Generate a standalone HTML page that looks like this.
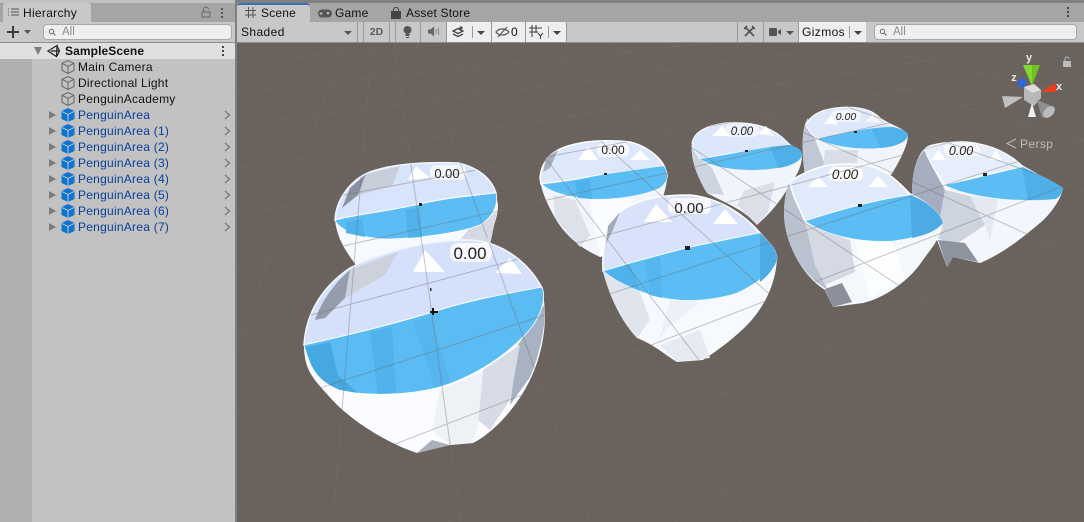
<!DOCTYPE html>
<html><head><meta charset="utf-8"><style>
html,body{margin:0;padding:0;width:1084px;height:522px;overflow:hidden;background:#808080;font-family:"Liberation Sans",sans-serif;font-size:12px;color:#111}
.a{position:absolute}
.row{position:absolute;left:78px;height:16px;line-height:16px;font-size:12px;letter-spacing:.25px;white-space:nowrap}
.blue{color:#0a3f9a}
.ic{position:absolute;left:60px;width:16px;height:16px}
.tri{position:absolute;left:49px;width:0;height:0;border-left:7px solid #7c7c7c;border-top:4px solid transparent;border-bottom:4px solid transparent}
.chev{position:absolute;left:224px;width:7px;height:10px}
.t{position:absolute;top:3px;height:19px;line-height:21px;font-size:12px;letter-spacing:.2px}
</style></head><body>
<div class="a" style="left:0;top:0;width:235px;height:522px;background:#c2c2c2"></div>
<div class="a" style="left:0;top:3px;width:235px;height:19px;background:#a5a5a5"></div>
<div class="a" style="left:3px;top:3px;width:88px;height:19px;background:#c8c8c8;border-radius:3px 3px 0 0"></div>
<svg class="a" style="left:7px;top:7px" width="14" height="12"><path d="M1 2h1M4 2h8M1 5h1M4 5h8M1 8h1M4 8h8" stroke="#555" stroke-width="1"/></svg>
<div class="t" style="left:23px;letter-spacing:.3px">Hierarchy</div>
<svg class="a" style="left:200px;top:6px" width="30" height="12"><path d="M2 6h8v5H2zM3.500 6V3.500a2.500 2.500 0 0 1 5 0" fill="none" stroke="#666"/><path d="M21 2h2v2h-2zM21 6h2v2h-2zM21 10h2v2h-2z" fill="#555"/></svg>
<div class="a" style="left:0;top:22px;width:235px;height:20px;background:#c8c8c8;border-bottom:1px solid #8e8e8e"></div>
<svg class="a" style="left:6px;top:25px" width="26" height="14"><path d="M7 1v12M1 7h12" stroke="#3a3a3a" stroke-width="2"/><path d="M18 5h7l-3.500 4z" fill="#555"/></svg>
<div class="a" style="left:43px;top:24px;width:187px;height:14px;background:#efefef;border:1px solid #a8a8a8;border-radius:4px"></div>
<svg class="a" style="left:48px;top:28px" width="10" height="9"><circle cx="3.500" cy="3.500" r="2.200" fill="none" stroke="#666"/><path d="M5 5l2.500 2.500" stroke="#666"/></svg>
<div class="a" style="left:62px;top:25px;line-height:15px;font-size:11.500px;color:#8c8c8c">All</div>

<div class="a" style="left:0;top:43px;width:32px;height:479px;background:#b0b0b0"></div>
<div class="a" style="left:0;top:43px;width:235px;height:16px;background:#e0e0e0"></div>
<div class="a" style="left:34px;top:47px;width:0;height:0;border-top:8px solid #7c7c7c;border-left:4.500px solid transparent;border-right:4.500px solid transparent"></div>
<svg class="a" style="left:47px;top:44px" width="14" height="14"><path d="M1 7L10 1.500 9.500 12.500zM4 7h8M10 2l2.500 5L10 12" fill="none" stroke="#222" stroke-width="1.200"/></svg>
<div class="row" style="left:65px;top:43px;font-weight:bold;letter-spacing:.1px">SampleScene</div>
<svg class="a" style="left:221px;top:46px" width="4" height="11"><path d="M1 0h2v2H1zM1 4h2v2H1zM1 8h2v2H1z" fill="#444"/></svg>

<svg class="ic" style="top:59px" viewBox="0 0 16 16"><path d="M8 1.500l6 2.800v7.200L8 14.500l-6-3V4.300zM2 4.300l6 3 6-3M8 7.300v7.200" fill="none" stroke="#666"/></svg>
<div class="row" style="top:59px">Main Camera</div>
<svg class="ic" style="top:75px" viewBox="0 0 16 16"><path d="M8 1.500l6 2.800v7.200L8 14.500l-6-3V4.300zM2 4.300l6 3 6-3M8 7.300v7.200" fill="none" stroke="#666"/></svg>
<div class="row" style="top:75px">Directional Light</div>
<svg class="ic" style="top:91px" viewBox="0 0 16 16"><path d="M8 1.500l6 2.800v7.200L8 14.500l-6-3V4.300zM2 4.300l6 3 6-3M8 7.300v7.200" fill="none" stroke="#666"/></svg>
<div class="row" style="top:91px">PenguinAcademy</div>

<div class="tri" style="top:111px"></div><svg class="ic" style="top:107px" viewBox="0 0 16 16"><path d="M8 1l6.500 3v8L8 15l-6.500-3V4z" fill="#1273cf"/><path d="M2 4.500l6 3 6-3M8 7.500V15" fill="none" stroke="#c2dcf5" stroke-width=".9"/></svg><div class="row blue" style="top:107px">PenguinArea</div><svg class="chev" style="top:110px"><path d="M1 1l4.500 4L1 9" fill="none" stroke="#777" stroke-width="1.300"/></svg>
<div class="tri" style="top:127px"></div><svg class="ic" style="top:123px" viewBox="0 0 16 16"><path d="M8 1l6.500 3v8L8 15l-6.500-3V4z" fill="#1273cf"/><path d="M2 4.500l6 3 6-3M8 7.500V15" fill="none" stroke="#c2dcf5" stroke-width=".9"/></svg><div class="row blue" style="top:123px">PenguinArea (1)</div><svg class="chev" style="top:126px"><path d="M1 1l4.500 4L1 9" fill="none" stroke="#777" stroke-width="1.300"/></svg>
<div class="tri" style="top:143px"></div><svg class="ic" style="top:139px" viewBox="0 0 16 16"><path d="M8 1l6.500 3v8L8 15l-6.500-3V4z" fill="#1273cf"/><path d="M2 4.500l6 3 6-3M8 7.500V15" fill="none" stroke="#c2dcf5" stroke-width=".9"/></svg><div class="row blue" style="top:139px">PenguinArea (2)</div><svg class="chev" style="top:142px"><path d="M1 1l4.500 4L1 9" fill="none" stroke="#777" stroke-width="1.300"/></svg>
<div class="tri" style="top:159px"></div><svg class="ic" style="top:155px" viewBox="0 0 16 16"><path d="M8 1l6.500 3v8L8 15l-6.500-3V4z" fill="#1273cf"/><path d="M2 4.500l6 3 6-3M8 7.500V15" fill="none" stroke="#c2dcf5" stroke-width=".9"/></svg><div class="row blue" style="top:155px">PenguinArea (3)</div><svg class="chev" style="top:158px"><path d="M1 1l4.500 4L1 9" fill="none" stroke="#777" stroke-width="1.300"/></svg>
<div class="tri" style="top:175px"></div><svg class="ic" style="top:171px" viewBox="0 0 16 16"><path d="M8 1l6.500 3v8L8 15l-6.500-3V4z" fill="#1273cf"/><path d="M2 4.500l6 3 6-3M8 7.500V15" fill="none" stroke="#c2dcf5" stroke-width=".9"/></svg><div class="row blue" style="top:171px">PenguinArea (4)</div><svg class="chev" style="top:174px"><path d="M1 1l4.500 4L1 9" fill="none" stroke="#777" stroke-width="1.300"/></svg>
<div class="tri" style="top:191px"></div><svg class="ic" style="top:187px" viewBox="0 0 16 16"><path d="M8 1l6.500 3v8L8 15l-6.500-3V4z" fill="#1273cf"/><path d="M2 4.500l6 3 6-3M8 7.500V15" fill="none" stroke="#c2dcf5" stroke-width=".9"/></svg><div class="row blue" style="top:187px">PenguinArea (5)</div><svg class="chev" style="top:190px"><path d="M1 1l4.500 4L1 9" fill="none" stroke="#777" stroke-width="1.300"/></svg>
<div class="tri" style="top:207px"></div><svg class="ic" style="top:203px" viewBox="0 0 16 16"><path d="M8 1l6.500 3v8L8 15l-6.500-3V4z" fill="#1273cf"/><path d="M2 4.500l6 3 6-3M8 7.500V15" fill="none" stroke="#c2dcf5" stroke-width=".9"/></svg><div class="row blue" style="top:203px">PenguinArea (6)</div><svg class="chev" style="top:206px"><path d="M1 1l4.500 4L1 9" fill="none" stroke="#777" stroke-width="1.300"/></svg>
<div class="tri" style="top:223px"></div><svg class="ic" style="top:219px" viewBox="0 0 16 16"><path d="M8 1l6.500 3v8L8 15l-6.500-3V4z" fill="#1273cf"/><path d="M2 4.500l6 3 6-3M8 7.500V15" fill="none" stroke="#c2dcf5" stroke-width=".9"/></svg><div class="row blue" style="top:219px">PenguinArea (7)</div><svg class="chev" style="top:222px"><path d="M1 1l4.500 4L1 9" fill="none" stroke="#777" stroke-width="1.300"/></svg>

<!-- Right header -->
<div class="a" style="left:237px;top:3px;width:847px;height:19px;background:#a5a5a5"></div>
<div class="a" style="left:237px;top:3px;width:73px;height:19px;background:#c8c8c8;border-radius:3px 3px 0 0;border-top:2px solid #3a72b0;box-sizing:border-box"></div>
<svg class="a" style="left:245px;top:7px" width="12" height="12"><path d="M3.500 0v11M8 0v11M0 3.500h11M0 8h11" stroke="#555"/></svg>
<div class="t" style="left:261px">Scene</div>
<svg class="a" style="left:318px;top:9px" width="14" height="9"><rect x="0" y="0.500" width="14" height="8" rx="4" fill="#555"/><circle cx="10" cy="4" r="1.300" fill="#bbb"/><path d="M3 3v3M1.500 4.500h3" stroke="#bbb"/></svg>
<div class="t" style="left:335px">Game</div>
<svg class="a" style="left:390px;top:7px" width="12" height="12"><path d="M1 4h10v8H1z" fill="#444"/><path d="M3.500 4V2.500a2.500 2 0 0 1 5 0V4" fill="none" stroke="#444"/></svg>
<div class="t" style="left:406px">Asset Store</div>
<svg class="a" style="left:1067px;top:7px" width="4" height="12"><path d="M0 0h2v2H0zM0 4h2v2H0zM0 8h2v2H0z" fill="#444"/></svg>

<div class="a" style="left:237px;top:22px;width:847px;height:20px;background:#c8c8c8"></div>
<div class="a" style="left:237px;top:42px;width:847px;height:1px;background:#8e8e8e"></div>
<div class="a" style="left:241px;top:24px;line-height:17px;font-size:12px;letter-spacing:.4px">Shaded</div>
<div class="a" style="left:344px;top:31px;width:0;height:0;border-top:4px solid #555;border-left:4px solid transparent;border-right:4px solid transparent"></div>
<div class="a" style="left:357px;top:22px;width:1px;height:20px;background:#999"></div>
<div class="a" style="left:363px;top:22px;width:1px;height:20px;background:#999"></div>
<div class="a" style="left:364px;top:24px;width:25px;text-align:center;line-height:17px;font-size:10.500px;font-weight:bold;color:#5c5c5c">2D</div>
<div class="a" style="left:389px;top:22px;width:1px;height:20px;background:#999"></div>
<div class="a" style="left:395px;top:22px;width:1px;height:20px;background:#999"></div>
<svg class="a" style="left:401px;top:25px" width="13" height="14"><circle cx="6.500" cy="5" r="4" fill="#555"/><path d="M4.500 9h4v2h-4zM5 12h3v1H5z" fill="#555"/></svg>
<div class="a" style="left:420px;top:22px;width:1px;height:20px;background:#999"></div>
<svg class="a" style="left:428px;top:26px" width="13" height="11"><path d="M0 3.500h2.500L6 .5v10L2.500 7.500H0z" fill="#666"/><path d="M8 3v5M10.500 2v7" stroke="#888" fill="none"/></svg>
<div class="a" style="left:447px;top:22px;width:44px;height:20px;background:#eee"></div>
<div class="a" style="left:491px;top:22px;width:1px;height:20px;background:#999"></div>
<div class="a" style="left:492px;top:22px;width:33px;height:20px;background:#eee"></div>
<div class="a" style="left:525px;top:22px;width:1px;height:20px;background:#999"></div>
<div class="a" style="left:526px;top:22px;width:40px;height:20px;background:#eee"></div>
<div class="a" style="left:566px;top:22px;width:1px;height:20px;background:#999"></div>
<div class="a" style="left:446px;top:22px;width:1px;height:20px;background:#999"></div>
<svg class="a" style="left:452px;top:25px" width="14" height="14"><path d="M1 6l5-2.500L11 6 6 8.500zM1 9l5 2.500L11 9M9 1v5M7 3h4" fill="none" stroke="#444" stroke-width="1.300"/></svg>
<div class="a" style="left:472px;top:26px;width:1px;height:12px;background:#999"></div>
<div class="a" style="left:477px;top:31px;width:0;height:0;border-top:4px solid #444;border-left:4px solid transparent;border-right:4px solid transparent"></div>
<svg class="a" style="left:495px;top:26px" width="15" height="12"><path d="M1 6c3-4 9-4 13 0-4 4-10 4-13 0zM3 11L12 1" fill="none" stroke="#555" stroke-width="1.200"/></svg>
<div class="a" style="left:511px;top:24px;line-height:17px;font-size:12px">0</div>
<svg class="a" style="left:529px;top:24px" width="15" height="16"><path d="M3 1v12M7 1v8M0 4h13M0 8h9M9 9l2.500 3L14 9M11.500 12v3" fill="none" stroke="#444" stroke-width="1.100"/></svg>
<div class="a" style="left:548px;top:26px;width:1px;height:12px;background:#999"></div>
<div class="a" style="left:553px;top:31px;width:0;height:0;border-top:4px solid #444;border-left:4px solid transparent;border-right:4px solid transparent"></div>

<div class="a" style="left:737px;top:22px;width:1px;height:20px;background:#999"></div>
<svg class="a" style="left:743px;top:25px" width="13" height="13"><path d="M2 2l9 9M11 2L2 11" stroke="#555" stroke-width="1.800"/><path d="M1 4l3-3M9 1l3 3" stroke="#444" stroke-width="1.300"/></svg>
<div class="a" style="left:763px;top:22px;width:1px;height:20px;background:#999"></div>
<svg class="a" style="left:769px;top:28px" width="13" height="9"><rect x="0" y="0" width="8" height="8" rx="1" fill="#555"/><path d="M9 3l3-2v6l-3-2z" fill="#555"/></svg>
<div class="a" style="left:786px;top:31px;width:0;height:0;border-top:4px solid #555;border-left:4px solid transparent;border-right:4px solid transparent"></div>
<div class="a" style="left:798px;top:22px;width:1px;height:20px;background:#999"></div>
<div class="a" style="left:799px;top:22px;width:67px;height:20px;background:#eee"></div>
<div class="a" style="left:802px;top:24px;line-height:17px;font-size:12px;letter-spacing:.4px">Gizmos</div>
<div class="a" style="left:849px;top:26px;width:1px;height:12px;background:#999"></div>
<div class="a" style="left:854px;top:31px;width:0;height:0;border-top:4px solid #444;border-left:4px solid transparent;border-right:4px solid transparent"></div>
<div class="a" style="left:874px;top:24px;width:201px;height:14px;background:#efefef;border:1px solid #a8a8a8;border-radius:4px"></div>
<svg class="a" style="left:879px;top:28px" width="10" height="9"><circle cx="3.500" cy="3.500" r="2.200" fill="none" stroke="#666"/><path d="M5 5l2.500 2.500" stroke="#666"/></svg>
<div class="a" style="left:893px;top:25px;line-height:15px;font-size:11.500px;color:#8c8c8c">All</div>

<!-- Scene -->
<svg class="a" style="left:237px;top:43px" width="847" height="479" viewBox="237 43 847 479">
<defs>
<path id="grid" fill="none" d="M344 43L237 349M372 43L333 522M394 43L461 522M417 43L590 522M444 43L741 522M458 43L822 522M493 43L1020 522M535 43L1084 409M607 43L1084 260M668 43L1084 191M740 43L1084 141M843 43L1084 96M237 62L465 43M237 92L709 43M237 125L886 43M237 168L1039 43M237 215L1084 56M237 270L1084 79M237 335L1084 106M237 415L1084 140M237 505L1084 178M448 522L1084 226M674 522L1084 289M865 522L1084 369"/>
<clipPath id="bowls">
<path d="M803 135C804 120 815 110 835 108C850 106 870 107 880 118C890 125 905 128 908 135C908 145 900 160 893 172C885 185 860 188 815 198L808 190C803 170 802 150 803 135Z"/>
<path d="M692 143C694 132 705 126 725 123C745 122 770 123 787 142L802 155C802 168 795 178 788 188C778 205 768 215 757 225C745 210 725 203 707 193C698 178 690 160 692 143Z"/>
<path d="M912 192C912 170 918 150 930 145C945 141 965 140 980 144C1000 148 1015 158 1022 165L1063 188C1062 198 1050 215 1040 223C1020 240 1000 255 980 263L953 257L947 267L937 240C925 225 912 210 912 192Z"/>
<path d="M335 220C336 200 350 180 370 172C395 163 430 162 458 163C480 168 495 185 498 205C498 225 485 245 470 262L360 270C348 255 337 240 335 220Z"/>
<path d="M540 178C541 165 548 153 565 147C585 140 610 140 630 142C650 147 662 160 667 172C668 190 660 205 650 225L640 245L600 257C580 248 565 235 555 218C548 205 541 192 540 178Z"/>
<path d="M784 213C784 195 790 180 805 172C825 164 850 163 870 167C890 172 903 185 910 193C925 200 940 212 943 223C940 240 930 250 923 260C910 280 885 298 863 303L833 307L825 290C805 278 784 245 784 213Z"/>
<path d="M603 270C602 250 605 225 620 212C640 197 665 195 690 195C720 198 745 215 760 232C770 243 777 250 777 260C775 285 765 305 750 322C735 338 718 350 703 360L677 362C665 355 655 345 637 338C625 325 612 305 603 270Z"/>
<path d="M304 345C306 310 325 285 350 268C375 255 420 240 470 240C505 242 530 265 542 290C547 310 547 345 530 380C518 405 495 432 473 443L450 445L417 453C392 445 350 422 327 394C312 378 304 368 304 345Z"/>
</clipPath>
</defs>
<rect x="237" y="43" width="847" height="479" fill="#6a625c"/>
<use href="#grid" stroke="#7a736d" stroke-opacity=".35"/>

<!-- bowl 6 -->
<path d="M803 135C804 120 815 110 835 108C850 106 870 107 880 118C890 125 905 128 908 135C908 145 900 160 893 172C885 185 860 188 815 198L808 190C803 170 802 150 803 135Z" fill="#f0f4fb"/>
<path d="M803 135C804 125 806 120 808 118C812 135 818 145 825 165L822 195L808 190C803 170 802 150 803 135Z" fill="#c0c7d5"/>
<polygon points="825,150 858,150 855,186 820,195" fill="#d8dde8"/>
<path d="M806 125C810 115 820 110 835 108C850 106 870 107 880 118C888 124 900 128 908 135C890 127 855 132 818 139C812 135 808 130 806 125Z" fill="#dfe8fb" stroke="#fff"/>
<path d="M818 139C845 133 870 127 892 127C900 128 908 132 908 135C907 142 895 147 880 148C860 150 835 147 818 139Z" fill="#5bbdf3"/>
<path d="M872 129L892 127C900 128 908 132 908 135C907 142 895 147 880 148Z" fill="#50b2ea"/>
<rect x="831" y="110" width="30" height="12" rx="6" fill="#f2f5fc"/>
<polygon points="824,124 831,116 838,124" fill="#fff"/><polygon points="865,122 873,113 881,123" fill="#f4f6fc"/>
<text x="846" y="120" font-size="10.500" font-style="italic" text-anchor="middle" fill="#222" font-family="Liberation Sans">0.00</text>
<rect x="854" y="131" width="3" height="2" fill="#222"/>

<!-- bowl 4 -->
<path d="M692 143C694 132 705 126 725 123C745 122 770 123 787 142L802 155C802 168 795 178 788 188C778 205 768 215 757 225C745 210 725 203 707 193C698 178 690 160 692 143Z" fill="#f0f4fb"/>
<path d="M692 143L700 159L712 168L724 195L707 193C698 178 690 160 692 143Z" fill="#cdd3df"/>
<polygon points="745,190 775,182 768,212 757,225 737,205" fill="#dcdfe8"/>
<path d="M692 143C694 132 705 126 725 123C745 122 770 123 787 142L802 155C790 145 745 150 700 159C696 153 693 149 692 143Z" fill="#dde7fb" stroke="#fff"/>
<path d="M700 159C730 155 760 147 790 145C797 147 802 150 802 155C800 165 780 169 755 170C735 170 715 168 700 159Z" fill="#5bbdf3"/>
<path d="M770 147L790 145C797 147 802 150 802 155C800 162 788 167 778 168Z" fill="#4fb0e8"/>
<rect x="725" y="124" width="34" height="13" rx="6" fill="#eef2fc"/>
<polygon points="712,136 722,126 730,136" fill="#fff"/><polygon points="758,134 766,126 774,136" fill="#fff"/>
<text x="742" y="135" font-size="11.500" font-style="italic" text-anchor="middle" fill="#222" font-family="Liberation Sans">0.00</text>
<rect x="745" y="150" width="3" height="2" fill="#222"/>

<!-- bowl 8 -->
<path d="M912 192C912 170 918 150 930 145C945 141 965 140 980 144C1000 148 1015 158 1022 165L1063 188C1062 198 1050 215 1040 223C1020 240 1000 255 980 263L953 257L947 267L937 240C925 225 912 210 912 192Z" fill="#f3f7fd"/>
<path d="M912 192C912 170 918 155 925 150C930 165 940 180 945 190L937 235C925 225 912 210 912 192Z" fill="#a5adbe"/>
<polygon points="945,190 970,196 985,225 955,245 937,238" fill="#cdd3df"/>
<polygon points="938,240 965,243 978,262 953,257 947,267" fill="#8d939f"/>
<polygon points="970,196 998,199 990,240 985,225" fill="#e4e8f0"/>
<path d="M925 150C945 141 965 140 980 144C1000 148 1015 158 1023 167C1000 172 970 178 945 185C935 170 928 160 925 150Z" fill="#e6eefc" stroke="#fff"/>
<path d="M945 185C970 180 1000 172 1023 167C1040 175 1055 182 1063 188C1062 195 1058 198 1055 199C1030 202 975 200 945 185Z" fill="#5bbdf3"/>
<path d="M1022 168C1040 175 1055 182 1063 188C1062 195 1058 198 1055 199L1028 200Z" fill="#4fb0e8"/>
<rect x="944" y="143" width="36" height="13" rx="6" fill="#f5f7fd"/>
<polygon points="932,160 938,150 946,160" fill="#fff"/><polygon points="990,160 996,150 1002,160" fill="#fff"/>
<text x="961" y="155" font-size="12.500" font-style="italic" text-anchor="middle" fill="#222" font-family="Liberation Sans">0.00</text>
<rect x="983" y="173" width="4" height="3" fill="#222"/>

<!-- bowl 2 -->
<path d="M335 220C336 200 350 180 370 172C395 163 430 162 458 163C480 168 495 185 498 205C498 225 485 245 470 262L360 270C348 255 337 240 335 220Z" fill="#f6f9fe"/>
<polygon points="470,228 497,212 490,245 470,262 460,240" fill="#d5dae5"/>
<path d="M335 220C336 200 350 180 370 172C395 163 430 162 458 163C480 168 492 180 496 193C470 196 445 198 420 204C390 211 360 214 335 220Z" fill="#d8e4fb" stroke="#f0f7ff" stroke-width="1.500"/>
<polygon points="342,208 350,188 366,174 358,195" fill="#8a91a0"/>
<polygon points="366,174 400,166 392,186 358,195" fill="#c9cfda"/>
<path d="M335 220C360 214 390 211 420 204C445 198 470 196 496 193C499 205 492 218 480 225C460 233 420 238 390 239C365 239 340 232 335 220Z" fill="#5bbdf3" stroke="#fff" stroke-width=".8"/>
<polygon points="346,222 362,219 365,237 346,233" fill="#50b2ea"/><polygon points="405,210 420,207 422,237 408,238" fill="#50b2ea"/>
<rect x="430" y="165" width="36" height="15" rx="6" fill="#f4f7fd"/>
<polygon points="408,180 416,166 430,178" fill="#fff"/>
<text x="447" y="178" font-size="13" text-anchor="middle" fill="#222" font-family="Liberation Sans">0.00</text>
<rect x="419" y="203" width="3" height="3" fill="#222"/>

<!-- bowl 3 -->
<path d="M540 178C541 165 548 153 565 147C585 140 610 140 630 142C650 147 662 160 667 172C668 190 660 205 650 225L640 245L600 257C580 248 565 235 555 218C548 205 541 192 540 178Z" fill="#f2f6fc"/>
<polygon points="553,195 575,200 590,235 580,247 555,218" fill="#dde1ea"/>
<polygon points="590,200 630,198 640,235 600,257" fill="#fafcff"/>
<path d="M540 178C541 165 548 153 565 147C585 140 610 140 630 142C650 147 662 160 665 168C640 170 625 172 605 174C585 178 560 182 541 184Z" fill="#dee8fb" stroke="#fff" stroke-width="1.500"/>
<polygon points="543,172 546,158 558,150 550,168" fill="#a7aebc"/>
<path d="M542 184C565 182 585 178 605 174C625 171 645 168 664 166C670 175 668 182 660 188C640 197 610 200 590 199C570 197 550 193 542 184Z" fill="#5bbdf3" stroke="#eaf6ff" stroke-width=".6"/>
<polygon points="575,182 590,178 592,199 578,198" fill="#50b2ea"/>
<rect x="597" y="143" width="32" height="14" rx="6" fill="#f5f7fd"/>
<polygon points="578,160 588,146 598,160" fill="#fff"/><polygon points="630,160 640,150 650,160" fill="#fff"/>
<text x="613" y="154" font-size="12" text-anchor="middle" fill="#222" font-family="Liberation Sans">0.00</text>
<rect x="604" y="173" width="3" height="2" fill="#222"/>

<!-- bowl 7 -->
<path d="M784 213C784 195 790 180 805 172C825 164 850 163 870 167C890 172 903 185 910 193C925 200 940 212 943 223C940 240 930 250 923 260C910 280 885 298 863 303L833 307L825 290C805 278 784 245 784 213Z" fill="#f4f8fd"/>
<path d="M784 213C784 195 788 185 790 182C795 200 802 215 806 225L815 265L828 290C805 278 784 245 784 213Z" fill="#bac1cf"/>
<polygon points="806,224 823,231 850,240 855,272 825,285 815,265" fill="#d4d9e3"/>
<polygon points="825,289 842,283 852,302 833,307" fill="#8a8f9b"/>
<polygon points="855,240 893,241 905,280 870,298" fill="#fbfdff"/>
<path d="M790 182C795 177 815 167 830 165C850 163 870 164 880 170C893 175 903 187 910 195C875 200 840 210 805 221C798 205 792 195 790 182Z" fill="#e0eafb" stroke="#fff" stroke-width="1.500"/>
<path d="M805 221C840 210 875 200 910 195C925 200 940 212 943 223C935 232 915 238 893 241C860 243 825 235 805 221Z" fill="#5bbdf3" stroke="#eaf6ff" stroke-width=".6"/>
<path d="M910 195C925 200 940 212 943 223C935 232 925 235 912 238Z" fill="#4cabe3"/>
<rect x="829" y="167" width="34" height="14" rx="6" fill="#fff"/>
<polygon points="808,187 818,176 828,187" fill="#fff"/><polygon points="868,187 878,176 888,187" fill="#fff"/>
<text x="845" y="179" font-size="13.500" font-style="italic" text-anchor="middle" fill="#222" font-family="Liberation Sans">0.00</text>
<rect x="858" y="204" width="4" height="3" fill="#222"/>

<!-- bowl 5 -->
<path d="M603 270C602 250 605 225 620 212C640 197 665 195 690 195C720 198 745 215 760 232C770 243 777 250 777 260C775 285 765 305 750 322C735 338 718 350 703 360L677 362C665 355 655 345 637 338C625 325 612 305 603 270Z" fill="#f6f9fe"/>
<path d="M603 272L640 292L650 320L637 338C625 325 612 305 603 272Z" fill="#e0e4ed"/>
<polygon points="670,300 700,302 665,330 657,347" fill="#edf0f6"/>
<polygon points="660,345 700,330 710,358 677,362" fill="#e6eaf2"/>
<path d="M603 271C602 250 605 225 620 212C640 197 665 195 690 195C720 198 745 215 760 233C735 238 710 243 687 248C660 255 630 263 603 271Z" fill="#d8e3fb" stroke="#fff" stroke-width="1.500"/>
<polygon points="606,244 608,226 620,212 612,232" fill="#a3aab8"/>
<path d="M603 271C630 263 660 255 687 248C710 243 735 238 760 233C770 243 778 250 777 260C772 272 755 285 737 293C715 300 690 302 670 299C645 295 620 285 603 271Z" fill="#5bbdf3" stroke="#eaf6ff" stroke-width=".6"/>
<path d="M760 233C770 243 778 250 777 260C774 268 768 276 760 282Z" fill="#4cabe3"/>
<polygon points="606,272 630,264 640,290 617,280" fill="#50b2ea"/>
<polygon points="645,260 660,256 662,298 650,295" fill="#53b6ed"/>
<rect x="668" y="198" width="43" height="16" rx="6" fill="#f6f8fd"/>
<polygon points="644,222 656,204 672,222" fill="#fff"/><polygon points="713,224 725,209 738,224" fill="#fff"/>
<text x="689" y="213" font-size="15" text-anchor="middle" fill="#222" font-family="Liberation Sans">0.00</text>
<rect x="685" y="246" width="5" height="4" fill="#222"/>

<!-- bowl 1 -->
<path d="M304 345C306 310 325 285 350 268C375 255 420 240 470 240C505 242 530 265 542 290C547 310 547 345 530 380C518 405 495 432 473 443L450 445L417 453C392 445 350 422 327 394C312 378 304 368 304 345Z" fill="#fafcff"/>
<path d="M544 305C547 320 540 355 530 377L510 405L518 345Z" fill="#a8b2c3"/>
<polygon points="483,370 520,345 510,400 490,430 478,420" fill="#d6dbe5"/>
<polygon points="440,390 483,372 478,425 473,443 450,445 432,430" fill="#eef1f6"/>
<polygon points="417,453 432,440 450,445" fill="#aab0bc"/>
<path d="M304 345C306 310 325 285 350 268C375 255 420 240 470 240C505 242 530 265 542 288C520 292 500 295 477 300C465 303 445 308 433 312C400 322 350 335 304 345Z" fill="#d5e1fa" stroke="#f2f8ff" stroke-width="1.500"/>
<path d="M315 320C320 305 332 285 350 270L345 298L325 318Z" fill="#959dac"/>
<polygon points="350,270 398,252 385,275 345,298" fill="#ccd1db"/>
<path d="M304 345C350 335 400 322 433 312C470 300 510 293 542 287C547 300 540 320 523 337C500 360 470 378 440 387C410 395 370 397 340 390C320 382 310 370 304 345Z" fill="#5abcf3" stroke="#fff" stroke-width=".8"/>
<path d="M306 347L330 342L338 375L358 393L340 390C320 382 310 370 306 347Z" fill="#45a8e0"/>
<polygon points="370,332 392,327 396,392 378,394" fill="#50b2ea"/>
<polygon points="413,322 432,317 450,382 435,388" fill="#54b6ed"/>
<rect x="450" y="243" width="42" height="19" rx="8" fill="#f6f8fd"/>
<polygon points="413,272 425,250 445,272" fill="#fff"/><polygon points="495,273 510,258 522,274" fill="#fff"/>
<text x="470" y="259" font-size="17" text-anchor="middle" fill="#222" font-family="Liberation Sans">0.00</text>
<path d="M430 312h8M433 308v7" stroke="#111" stroke-width="2"/>
<rect x="430" y="288" width="1.500" height="3" fill="#333"/>

<!-- grid over bowls -->
<use href="#grid" stroke="#6a6a6a" stroke-opacity=".38" clip-path="url(#bowls)"/>

<!-- gizmo -->
<polygon points="1023,65 1040,65 1032,86" fill="#6fc11f"/>
<polygon points="1023,65 1032,65 1032,86" fill="#85d72f"/>
<polygon points="1041,92 1055,83 1057,92" fill="#e8401c"/>
<circle cx="1022" cy="83" r="4.500" fill="#2f65d8"/>
<polygon points="1024,87 1034,84 1041,90 1041,98 1034,106 1024,100" fill="#b8b8b8"/>
<polygon points="1024,87 1034,84 1041,90 1032,93" fill="#dcdcdc"/>
<polygon points="1023,97 1002,96 1005,108" fill="#c0c0c0"/>
<polygon points="1032,103 1028,117 1036,117" fill="#f2f2f2"/>
<polygon points="1037,100 1042,118 1054,107" fill="#8f8f8f"/>
<ellipse cx="1049" cy="112" rx="7" ry="4.500" transform="rotate(-45 1049 112)" fill="#bcbcbc"/>
<text x="1029" y="61" font-size="11" font-weight="bold" text-anchor="middle" fill="#e8e8e8" font-family="Liberation Sans">y</text>
<text x="1014" y="81" font-size="11" font-weight="bold" text-anchor="middle" fill="#e8e8e8" font-family="Liberation Sans">z</text>
<text x="1059" y="90" font-size="11" font-weight="bold" text-anchor="middle" fill="#e8e8e8" font-family="Liberation Sans">x</text>
<path d="M1063 61h8v6h-8z" fill="#bdbdbd"/><path d="M1065 61v-2a2 2 0 0 1 4 0" fill="none" stroke="#bdbdbd"/>
<path d="M1016 139l-9 4.500 9 4.500" fill="none" stroke="#bdbdbd"/>
<text x="1020" y="148" font-size="12" letter-spacing=".4" fill="#bdbdbd" font-family="Liberation Sans">Persp</text>
</svg>
</body></html>
